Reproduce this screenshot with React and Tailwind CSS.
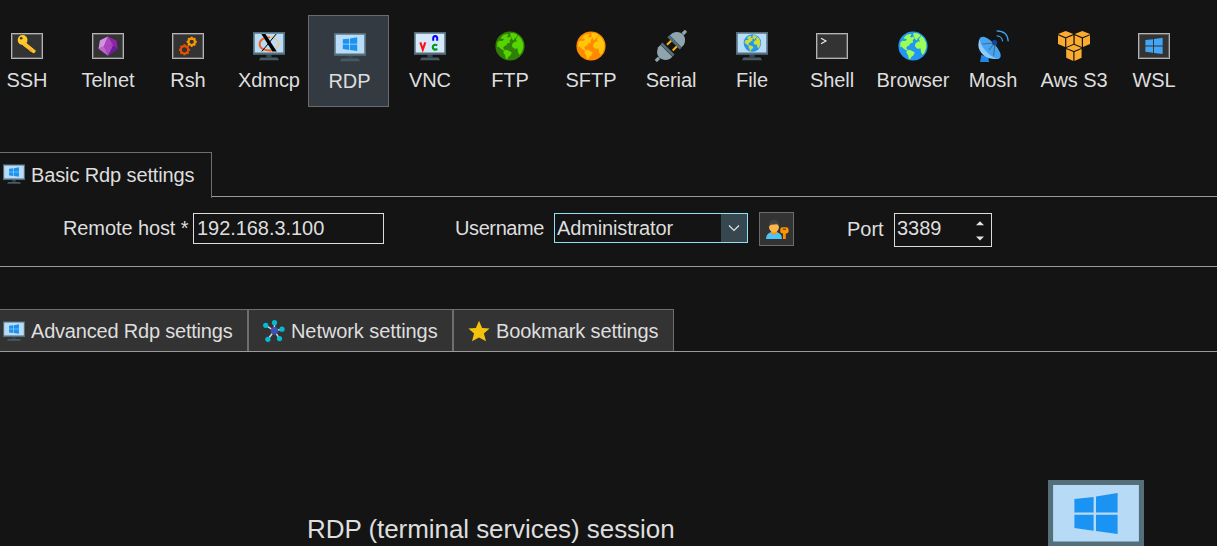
import React from "react";

function WinLogo({ fill = "#1b93f3" }) {
  return (
    <g fill={fill}>
      <path d="M8.8 8.3 15.2 7.7V12.8H8.8z" />
      <path d="M16 7.5 23.2 6.3V12.8H16z" />
      <path d="M8.8 13.6H15.2V18.9L8.8 18z" />
      <path d="M16 13.6H23.2V20L16 19z" />
    </g>
  );
}

function Monitor({ className = "size-8", screen = "#b9dcf8", children }) {
  return (
    <svg viewBox="0 0 32 32" className={`block shrink-0 ${className}`}>
      <path d="M13.4 24h5.2v3.4h-5.2z" fill="#37474f" />
      <path d="M7.5 27.5h17l1.5 2.7H6z" fill="#455a64" />
      <path d="M0 2h32v22.8H0z" fill="#546e7a" />
      <path d="M1.7 3.7h28.6v18.8H1.7z" fill={screen} />
      {children}
    </svg>
  );
}

function Boxed({ children }) {
  return (
    <svg viewBox="0 0 32 32" className="block size-8 shrink-0">
      <rect x="0.5" y="3.5" width="31" height="25" fill="#333" stroke="#b4b4b4" />
      <rect x="1.5" y="4.5" width="29" height="23" fill="none" stroke="#6c6c6c" strokeWidth="0.8" />
      {children}
    </svg>
  );
}

function GlobeShape({ sea, land }) {
  return (
    <g>
      <circle cx="16" cy="16" r="14.6" fill={sea} />
      <g fill={land}>
        <path d="M8 6.2 10 4.8 13.5 3.8 14.5 5 12.8 6.8 14.3 7.6 16.3 6.6 17.3 8.6 15.7 10.2 16 12.4 13.2 13.4 12.4 15.2 10.4 16.2 9 18 10.6 19.5 9.6 20.6 6.8 18.8 4.4 16.6 3.2 17.4 3.4 12.5 5.4 10.8 8.2 11 10 9.4 8.2 8.4 6.4 9z" />
        <path d="M9.8 20.4 12.4 19.8 15.3 21 17.8 22.6 16.3 25.4 14.2 27 13.4 29.2 11.8 28.5 11 25 9.4 22.8z" />
        <path d="M16.4 3 20.4 3.2 23.6 5 22.2 7.4 20.6 8.2 20 10.4 18.2 9.2 16.4 5.4z" />
        <path d="M24.2 5.6 27 8.6 29.2 13 29.4 17.6 27.6 22.4 25.6 25 24 22 23.6 18.4 20.4 18.8 18 16.6 18.4 13.6 21 11.4 23.2 11.6 21.8 9.4z" />
      </g>
    </g>
  );
}

function Globe({ sea, land }) {
  return (
    <svg viewBox="0 0 32 32" className="block size-8 shrink-0">
      <GlobeShape sea={sea} land={land} />
    </svg>
  );
}

function Gear({ cx, cy, r, color }) {
  const teeth = [0, 45, 90, 135, 180, 225, 270, 315];
  return (
    <g transform={`translate(${cx} ${cy})`}>
      <circle r={r} fill="none" stroke={color} strokeWidth="2.1" />
      {teeth.map((a) => (
        <rect key={a} x="-1" y={-r - 1.9} width="2" height="1.6" fill={color} transform={`rotate(${a})`} />
      ))}
    </g>
  );
}

function KeyIcon() {
  return (
    <Boxed>
      <path d="M13.4 14.6 22.6 21.4" stroke="#fbc02d" strokeWidth="3.4" strokeLinecap="round" />
      <path d="M15 13.5 24 21" stroke="#fbc02d" strokeWidth="1.6" strokeLinecap="round" />
      <path d="M18.5 19 20.6 21.4" stroke="#f9a825" strokeWidth="2" />
      <circle cx="11.6" cy="10" r="4.9" fill="#ffca28" />
      <circle cx="10.2" cy="8.2" r="1.3" fill="#3c3524" />
    </Boxed>
  );
}

function GemIcon() {
  return (
    <Boxed>
      <path d="M16 6.5 24.4 10.4 25.7 19 16 25.8 6.5 18.7 8 10.2z" fill="#8e24aa" />
      <path d="M16 6.5 12 16.2 6.5 18.7 8 10.2z" fill="#ce93d8" />
      <path d="M16 6.5 21.2 15.4 12 16.2z" fill="#ab47bc" />
      <path d="M12 16.2 21.2 15.4 16 25.8z" fill="#ab47bc" />
      <path d="M12 16.2 16 25.8 6.5 18.7z" fill="#ba68c8" />
      <path d="M21.2 15.4 25.7 19 16 25.8z" fill="#6a1b9a" />
    </Boxed>
  );
}

function GearsIcon() {
  return (
    <Boxed>
      <Gear cx={12.5} cy={19.8} r={3.7} color="#e65100" />
      <Gear cx={19.7} cy={11.8} r={3.2} color="#ff9800" />
    </Boxed>
  );
}

function XdmcpIcon() {
  return (
    <Monitor>
      <ellipse cx="16" cy="14" rx="9.6" ry="6.6" fill="none" stroke="#ffc069" strokeWidth="1.3" />
      <path d="M17 7.4C10.5 7 6.4 10.6 6.6 14.5 6.8 18.6 12 21 18.5 20.5" fill="none" stroke="#f4601e" strokeWidth="1.9" />
      <path d="M8.4 4H12.4L23.8 21.5H19.4z" fill="#000" />
      <path d="M23.2 4 8.8 21.5" stroke="#000" strokeWidth="1" />
    </Monitor>
  );
}

function VncIcon() {
  return (
    <Monitor screen="#d5e9fa">
      <path d="M6.3 12.4 8.8 19.6 11.3 12.4" fill="none" stroke="#ff1010" strokeWidth="2.1" />
      <path d="M19.2 10.8V8.4Q19.2 5.9 21.2 5.9T23.2 8.4V10.8" fill="none" stroke="#0000ff" strokeWidth="2" />
      <path d="M23.3 15.4C20.8 14 18.8 15 18.8 17.2S21 20.2 23.4 19" fill="none" stroke="#009a1a" strokeWidth="2.2" />
    </Monitor>
  );
}

function SerialIcon() {
  return (
    <svg viewBox="0 0 32 32" className="block size-8 shrink-0">
      <path d="M12 14.8 16.4 10.4M17.7 20.6 22 16.2" stroke="#ffb300" strokeWidth="2.1" />
      <path d="M.8 31 4 27.8M27.8 4 31 .8" stroke="#90a4ae" strokeWidth="3.2" />
      <path d="M5.6 15 17.4 26.8 14.8 29Q8.6 31.4 4.2 27.8 .5 23.2 3.2 17.2z" fill="#90a4ae" />
      <path d="M14.8 5.4 26.6 17.2 29 14.8Q31.6 8.6 27.8 4.2 23.2.5 17.2 3.2z" fill="#90a4ae" />
      <path d="M6.4 13.4 18.6 25.6M13.4 6.2 25.8 18.6" stroke="#546e7a" strokeWidth="2.8" />
    </svg>
  );
}

function ShellIcon() {
  return (
    <Boxed>
      <path d="M5 8.2 10 11 5 13.8" fill="none" stroke="#f0f0f0" strokeWidth="1.1" />
    </Boxed>
  );
}

function FileIcon() {
  return (
    <Monitor>
      <g transform="translate(6.8 3.4) scale(.6)">
        <GlobeShape sea="#2196f3" land="#cddc39" />
      </g>
    </Monitor>
  );
}

function MoshIcon() {
  return (
    <svg viewBox="0 0 32 32" className="block size-8 shrink-0">
      <path d="M4.2 25Q4 28 3 32h9.4Q11 29.6 12 27z" fill="#1e88e5" />
      <path d="M3.2 7.5Q-1.2 16.5 4.8 23.6T22.4 28.4L3.2 7.5z" fill="#90caf9" />
      <ellipse cx="13" cy="17.6" rx="14" ry="5.6" transform="rotate(47 13 18)" fill="#42a5f5" />
      <path d="M5.4 14 18 12.8 16.6 25.8M17.5 13 12 20" fill="none" stroke="#546e7a" strokeWidth="1.2" />
      <circle cx="17.6" cy="12.6" r="2.6" fill="#0d47a1" />
      <path d="M19.6 5.8Q25 6 25.6 11.4M19.6 .9Q30.8 1 31.2 11.4" fill="none" stroke="#42a5f5" strokeWidth="1.1" />
    </svg>
  );
}

function Cube() {
  return (
    <g>
      <path d="M0 3.1 7.7 0 15.4 3.1 7.7 6.3z" />
      <path d="M0 4.2 7.1 7.3V16.1L0 13z" />
      <path d="M15.4 4.2 8.3 7.3V16.1L15.4 13z" />
    </g>
  );
}

function AwsIcon() {
  return (
    <svg viewBox="0 0 32 32" className="block size-8 shrink-0">
      <g fill="#fbab30">
        <g transform="translate(0 1)"><Cube /></g>
        <g transform="translate(16.7 1)"><Cube /></g>
        <g transform="translate(8.2 14.8)" stroke="#141414" strokeWidth="1" paintOrder="stroke"><Cube /></g>
      </g>
    </svg>
  );
}

function WslIcon() {
  return (
    <Boxed>
      <g transform="translate(-3.2 .1) scale(1.2)">
        <WinLogo fill="#42a5f5" />
      </g>
    </Boxed>
  );
}

function NetworkIcon() {
  const nodes = [[11.5, 2.7], [19, 9.2], [16.5, 18.6], [4.9, 19.3], [2.7, 5.3]];
  return (
    <svg viewBox="0 0 22 22" className="block size-[22px] shrink-0">
      {nodes.map(([x, y]) => (
        <path key={x} d={`M11.4 10.8 ${x} ${y}`} stroke="#cfd8dc" strokeWidth="1.5" />
      ))}
      {nodes.map(([x, y]) => (
        <circle key={x} cx={x} cy={y} r="2.6" fill="#00bcd4" />
      ))}
      <circle cx="11.4" cy="10.8" r="3.7" fill="#3f51b5" />
    </svg>
  );
}

function StarIcon() {
  return (
    <svg viewBox="0 0 22 22" className="block size-[22px] shrink-0">
      <path d="M11 .8 14.1 7.9 21.6 8.5 15.9 13.5 18 21.2 11 17.4 4 21.2 6.1 13.5.4 8.5 7.9 7.9z" fill="#f4c20d" />
    </svg>
  );
}

function UserKeyIcon() {
  return (
    <svg viewBox="0 0 24 24" className="block size-6">
      <path d="M1 22Q1 15.4 9 14.6 17 15.4 17 22z" fill="#4fc3f7" />
      <path d="M6 13.4h6v2.8Q9 19 6 16.2z" fill="#ff9800" />
      <ellipse cx="9" cy="10" rx="5" ry="5.4" fill="#ffb74d" />
      <path d="M3.8 9.6Q3.2 3.3 9.2 2.8 15 3 14.2 9.6L12.2 7.2 6 7.8z" fill="#424242" />
      <path d="M18 14.5h2.8V22H18z" fill="#fb8c00" />
      <rect x="15.3" y="10.2" width="8.2" height="6.4" rx="2.4" fill="#ff9800" />
      <path d="M17.8 12.2h3.2" stroke="#5b3d10" strokeWidth="1.2" />
    </svg>
  );
}

const sessions = [
  ["SSH", <KeyIcon />],
  ["Telnet", <GemIcon />],
  ["Rsh", <GearsIcon />],
  ["Xdmcp", <XdmcpIcon />],
  ["RDP", <Monitor><WinLogo /></Monitor>],
  ["VNC", <VncIcon />],
  ["FTP", <Globe sea="#2f7f08" land="#55d400" />],
  ["SFTP", <Globe sea="#ff8a00" land="#ffc60a" />],
  ["Serial", <SerialIcon />],
  ["File", <FileIcon />],
  ["Shell", <ShellIcon />],
  ["Browser", <Globe sea="#2196f3" land="#9cff57" />],
  ["Mosh", <MoshIcon />],
  ["Aws S3", <AwsIcon />],
  ["WSL", <WslIcon />],
];

function Session({ name, icon, index }) {
  const active = name === "RDP";
  const box = active
    ? "-ml-px mr-px w-[81px] border border-[#6b6b6b] bg-[#333a41]"
    : index % 2 === 0
      ? "w-[81px] pt-px"
      : "w-20 pt-px";
  return (
    <div className={`h-[92px] shrink-0 ${box}`}>
      <div className={active ? "pt-[15px] pl-[25px]" : "pt-[14px] pl-6"}>{icon}</div>
      <div className={`mt-[6px] flex h-6 items-center justify-center whitespace-nowrap ${active ? "w-[81px]" : "w-20"}`}>{name}</div>
    </div>
  );
}

export default function App() {
  return (
    <div className="flex h-[546px] w-[1217px] flex-col overflow-hidden bg-[#141414] font-['Liberation_Sans',Arial,sans-serif] text-[20px] leading-6 text-[#dedede]">
      <div className="-ml-[13px] flex h-[152px] shrink-0 pt-[15px] tracking-[-0.08px]">
        {sessions.map(([name, icon], i) => (
          <Session key={name} name={name} icon={icon} index={i} />
        ))}
      </div>

      <div className="flex h-[46px] shrink-0">
        <div className="flex w-[212px] shrink-0 gap-[6px] border-t border-r border-[#6e6e6e] pt-[10px] pl-[3px] whitespace-nowrap">
          <Monitor className="size-[22px]"><WinLogo /></Monitor>
          <span className="tracking-[-0.12px]">Basic Rdp settings</span>
        </div>
        <div className="h-[45px] flex-1 border-b border-[#9a9a9a]" />
      </div>

      <div className="flex h-[69px] shrink-0 items-start border-b border-[#9a9a9a] pt-[14px] pl-[63px] whitespace-nowrap">
        <div className="w-[130px] pt-1 tracking-[-0.1px]">Remote host *</div>
        <div className="mt-px h-[31px] w-[191px] border border-[#dcdcdc] pt-[2px] pl-[3px] tracking-[-0.05px]">192.168.3.100</div>
        <div className="ml-[71px] w-[99px] pt-1 tracking-[-0.4px]">Username</div>
        <div className="mt-px flex h-[30px] w-[194px] border border-[#8fe3f0]">
          <div className="flex-1 pt-[2px] pl-[2px] tracking-[-0.14px]">Administrator</div>
          <div className="flex w-[26px] items-center justify-center bg-[#37474f]">
            <svg viewBox="0 0 12 8" className="h-2 w-3"><path d="M1 1.5 6 6.5 11 1.5" fill="none" stroke="#e4e4e4" strokeWidth="1.2" /></svg>
          </div>
        </div>
        <div className="ml-[11px] flex h-[34px] w-[35px] items-center justify-center border border-[#6b6b6b] bg-[#333]">
          <UserKeyIcon />
        </div>
        <div className="ml-[53px] w-[47px] pt-[5px]">Port</div>
        <div className="mt-px flex h-[34px] w-[98px] justify-between border border-[#dcdcdc] pt-[2px] pr-[7px] pl-[2px]">
          <span>3389</span>
          <svg viewBox="0 0 8 20" className="mt-[5px] h-5 w-2" fill="#e4e4e4"><path d="M0 4.2 4 .3 8 4.2zM0 15.6 4 19.5 8 15.6z" /></svg>
        </div>
      </div>

      <div className="mt-[42px] flex h-[43px] shrink-0 border-b border-[#9a9a9a] whitespace-nowrap">
        <div className="flex w-[248px] gap-[6px] border-t border-r border-[#6e6e6e] bg-[#333] pt-[9px] pl-[3px]">
          <Monitor className="mt-px size-[22px]"><WinLogo /></Monitor>
          <span className="tracking-[-0.2px]">Advanced Rdp settings</span>
        </div>
        <div className="flex w-[205px] gap-[6px] border-t border-r border-l border-[#6e6e6e] bg-[#333] pt-[9px] pl-[14px]">
          <div className="pt-px"><NetworkIcon /></div>
          <span className="tracking-[-0.08px]">Network settings</span>
        </div>
        <div className="flex w-[221px] gap-[6px] border-t border-r border-l border-[#6e6e6e] bg-[#333] pt-[9px] pl-[14px]">
          <div className="pt-px"><StarIcon /></div>
          <span className="tracking-[-0.12px]">Bookmark settings</span>
        </div>
      </div>

      <div className="flex min-h-0 flex-1 overflow-hidden pl-[307px]">
        <div className="mt-[161px] w-[741px] text-[26px] leading-8 tracking-[-0.06px]">RDP (terminal services) session</div>
        <div className="mt-[122px]">
          <Monitor className="size-24" screen="#b7daf6"><WinLogo /></Monitor>
        </div>
      </div>
    </div>
  );
}
